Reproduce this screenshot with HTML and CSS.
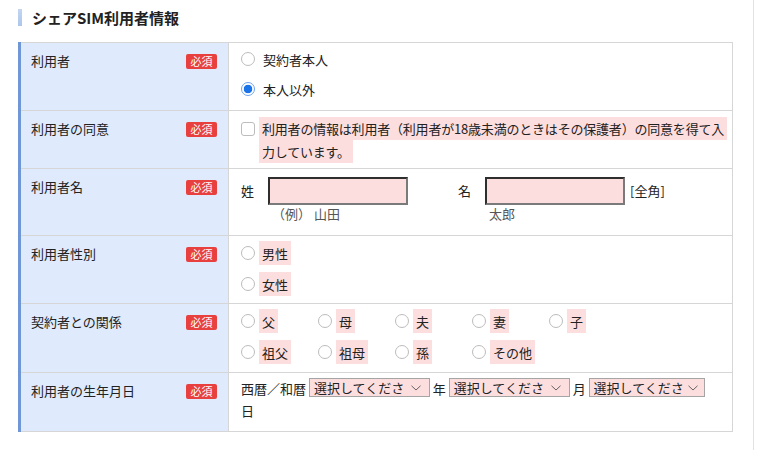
FILE: index.html
```html
<!DOCTYPE html>
<html lang="ja">
<head>
    <meta charset="utf-8">
    <title>シェアSIM利用者情報</title>
    <link rel="stylesheet" href="styles.css">
</head>
<body>
<div class="page">
    <h2 class="sectionTitle">シェアSIM利用者情報</h2>
    <table class="formTable">
        <colgroup>
            <col class="colHead">
            <col>
        </colgroup>
        <tr>
            <th><div class="thInner"><span>利用者</span><span class="req">必須</span></div></th>
            <td class="rowUser">
                <div class="choiceList">
                    <label class="choice"><input type="radio" name="user"><span>契約者本人</span></label>
                    <label class="choice"><input type="radio" name="user" checked><span>本人以外</span></label>
                </div>
            </td>
        </tr>
        <tr>
            <th><div class="thInner"><span>利用者の同意</span><span class="req">必須</span></div></th>
            <td class="rowAgree">
                <label class="agree">
                    <input type="checkbox">
                    <span class="agreeText"><span class="mark">利用者の情報は利用者（利用者が18歳未満のときはその保護者）の同意を得て入力しています。</span></span>
                </label>
            </td>
        </tr>
        <tr>
            <th><div class="thInner"><span>利用者名</span><span class="req">必須</span></div></th>
            <td class="rowName">
                <div class="nameFields">
                    <div class="namePart">
                        <span class="nameLabel">姓</span>
                        <div class="nameBox">
                            <input type="text" class="textInput">
                            <span class="note">（例） 山田</span>
                        </div>
                    </div>
                    <div class="namePart namePart2">
                        <span class="nameLabel">名</span>
                        <div class="nameBox">
                            <input type="text" class="textInput">
                            <span class="note">太郎</span>
                        </div>
                        <span class="nameSuffix">[全角]</span>
                    </div>
                </div>
            </td>
        </tr>
        <tr>
            <th><div class="thInner"><span>利用者性別</span><span class="req">必須</span></div></th>
            <td class="rowGender">
                <div class="choiceList gapWide">
                    <label class="choice marked"><input type="radio" name="gender"><span class="mark">男性</span></label>
                    <label class="choice marked"><input type="radio" name="gender"><span class="mark">女性</span></label>
                </div>
            </td>
        </tr>
        <tr>
            <th><div class="thInner"><span>契約者との関係</span><span class="req">必須</span></div></th>
            <td class="rowRelation">
                <div class="choiceGrid">
                    <label class="choice marked"><input type="radio" name="rel"><span class="mark">父</span></label>
                    <label class="choice marked"><input type="radio" name="rel"><span class="mark">母</span></label>
                    <label class="choice marked"><input type="radio" name="rel"><span class="mark">夫</span></label>
                    <label class="choice marked"><input type="radio" name="rel"><span class="mark">妻</span></label>
                    <label class="choice marked"><input type="radio" name="rel"><span class="mark">子</span></label>
                    <label class="choice marked"><input type="radio" name="rel"><span class="mark">祖父</span></label>
                    <label class="choice marked"><input type="radio" name="rel"><span class="mark">祖母</span></label>
                    <label class="choice marked"><input type="radio" name="rel"><span class="mark">孫</span></label>
                    <label class="choice marked"><input type="radio" name="rel"><span class="mark">その他</span></label>
                </div>
            </td>
        </tr>
        <tr>
            <th><div class="thInner"><span>利用者の生年月日</span><span class="req">必須</span></div></th>
            <td class="rowBirth">
                西暦／和暦 <select class="dateSelect"><option>選択してください</option></select> 年 <select class="dateSelect"><option>選択してください</option></select> 月 <select class="dateSelect dateSelectDay"><option>選択してください</option></select> 日
            </td>
        </tr>
    </table>
</div>
</body>
</html>
```

FILE: styles.css
```css
body{
    margin: 0;
    font-family: "Noto Sans CJK JP", "Noto Sans", sans-serif;
    font-size: 13px;
    color: #222;
}
.page{
    width: 735px;
    padding-left: 18px;
    min-height: 450px;
    border-right: 1px solid #e2e2e2;
}
.sectionTitle{
    display: flex;
    align-items: center;
    margin: 0 0 16px;
    padding-top: 9px;
    height: 17px;
    font-size: 15px;
    font-weight: bold;
    line-height: 17px;
}
.sectionTitle::before{
    content: "";
    width: 4px;
    height: 17px;
    margin-right: 10px;
    background: linear-gradient(#c3d5f1, #aec6ec);
}
.formTable{
    width: 715px;
    border-collapse: collapse;
    table-layout: fixed;
}
.colHead{
    width: 209px;
}
.formTable th,
.formTable td{
    border: 1px solid #d6d6d6;
    vertical-align: top;
}
.formTable th{
    padding: 8px 11px 8px 10px;
    background: #dfeafc;
    border-left: 3px solid #6f97d6;
    font-weight: normal;
    text-align: left;
}
.thInner{
    display: flex;
    justify-content: space-between;
    align-items: center;
    line-height: 19px;
}
.req{
    width: 31px;
    margin-top: 2px;
    background: #e8403f;
    color: #fff;
    font-size: 11px;
    line-height: 15px;
    text-align: center;
    border-radius: 2px;
}
.formTable td{
    padding: 6px 12px 7px;
}
.formTable td.rowUser{
    padding: 4px 12px 9px;
}
.mark{
    background: #fddede;
    padding: 0 3px;
}

/* ラジオ・チェックボックス */
.choice input[type=radio],
.agree input[type=checkbox]{
    appearance: none;
    flex: none;
    width: 14px;
    height: 14px;
    margin: 0;
    border: 1px solid #bcbcbc;
    background: #fff;
}
.choice input[type=radio]{
    border-radius: 50%;
}
.choice input[type=radio]:checked{
    border-color: #6ea3ef;
    background: radial-gradient(circle, #1a73e8 0 4px, #fff 4.6px);
}
.agree input[type=checkbox]{
    border-radius: 3px;
    margin-top: 5px;
}
.choiceList{
    display: flex;
    flex-direction: column;
    gap: 6px;
}
.choice{
    display: flex;
    align-items: center;
    gap: 8px;
    height: 24px;
}
.choice.marked{
    gap: 4px;
}
.choice.marked .mark{
    display: flex;
    align-items: center;
    height: 24px;
}
.gapWide{
    gap: 7px;
}
.formTable td.rowGender{
    padding-top: 5px;
}
.choiceGrid{
    display: grid;
    grid-template-columns: repeat(5, 77px);
    row-gap: 7px;
}
.formTable td.rowRelation{
    padding: 5px 12px 8px;
}

/* 同意 */
.formTable td.rowAgree{
    padding: 6px 0 5px 12px;
}
.agree{
    display: flex;
    gap: 4px;
}
.agreeText{
    width: 474px;
    line-height: 23px;
    letter-spacing: -0.2px;
}
.agreeText .mark{
    padding: 2px 3px;
    -webkit-box-decoration-break: clone;
    box-decoration-break: clone;
}

/* 氏名 */
.formTable td.rowName{
    padding: 8px 12px 12px;
}
.nameFields{
    display: flex;
    gap: 50px;
}
.namePart{
    display: flex;
    align-items: flex-start;
}
.nameLabel{
    width: 27px;
    line-height: 28px;
}
.nameBox{
    display: flex;
    flex-direction: column;
}
.textInput{
    box-sizing: border-box;
    width: 140px;
    height: 28px;
    margin: 0;
    border: 2px solid;
    border-color: #2e2e2e #7a7a7a #7a7a7a #2e2e2e;
    background: #fddede;
}
.note{
    padding-left: 4px;
    line-height: 18px;
    color: #555;
}
.nameSuffix{
    margin-left: 5px;
    line-height: 28px;
}

/* 生年月日 */
.formTable td.rowBirth{
    padding: 5px 20px 9px 12px;
    line-height: 22px;
}
.dateSelect{
    appearance: none;
    box-sizing: border-box;
    width: 121px;
    height: 19px;
    margin: 0;
    padding: 0 26px 0 4px;
    border: 1px solid #a5a5a5;
    border-radius: 0;
    background: #fddede url("data:image/svg+xml,%3Csvg xmlns='http://www.w3.org/2000/svg' width='10' height='6' viewBox='0 0 10 6'%3E%3Cpath d='M0.5 0.8 L5 5 L9.5 0.8' fill='none' stroke='%23555' stroke-width='0.9'/%3E%3C/svg%3E") no-repeat right 8px center;
    font-family: inherit;
    font-size: 13px;
    line-height: 17px;
    color: #222;
    vertical-align: 1px;
}
.dateSelectDay{
    width: 116px;
    padding-right: 20px;
    background-position: right 6px center;
}
```
